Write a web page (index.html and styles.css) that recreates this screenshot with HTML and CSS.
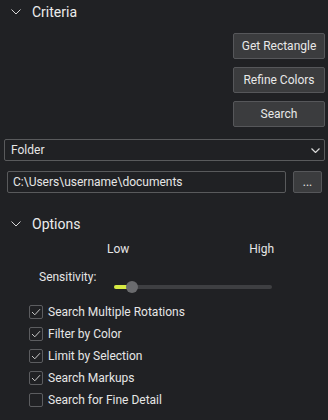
FILE: index.html
```html
<!DOCTYPE html>
<html>
<head>
<meta charset="utf-8">
<link rel="stylesheet" href="styles.css">
</head>
<body>
<div class="panel">
  <div class="section-head">
    <svg class="chev" width="10" height="6" viewBox="0 0 10 6"><polyline points="0.5,0.5 5,5 9.5,0.5" fill="none" stroke="#d8d8d8" stroke-width="1"/></svg>
    <span class="section-title">Criteria</span>
  </div>
  <div class="btn-col">
    <button class="btn">Get Rectangle</button>
    <button class="btn">Refine Colors</button>
    <button class="btn">Search</button>
  </div>
  <div class="select">
    <span>Folder</span>
    <svg width="9" height="5" viewBox="0 0 9 5"><polyline points="0.5,0.5 4.5,4.5 8.5,0.5" fill="none" stroke="#d8d8d8" stroke-width="1.2"/></svg>
  </div>
  <div class="path-row">
    <div class="input">C:\Users\username\documents</div>
    <button class="btn small">...</button>
  </div>
  <div class="section-head options">
    <svg class="chev" width="10" height="6" viewBox="0 0 10 6"><polyline points="0.5,0.5 5,5 9.5,0.5" fill="none" stroke="#d8d8d8" stroke-width="1"/></svg>
    <span class="section-title">Options</span>
  </div>
  <div class="scale-row">
    <span>Low</span>
    <span class="high">High</span>
  </div>
  <div class="sens-row">
    <span class="sens-label">Sensitivity:</span>
    <div class="slider">
      <div class="fill"></div>
      <div class="thumb"></div>
    </div>
  </div>
  <div class="checks">
    <div class="check"><span class="box on"><svg width="10" height="8" viewBox="0 0 10 8"><polyline points="1,4 3.8,6.8 9,1.2" fill="none" stroke="#c8c8c8" stroke-width="1"/></svg></span>Search Multiple Rotations</div>
    <div class="check"><span class="box on"><svg width="10" height="8" viewBox="0 0 10 8"><polyline points="1,4 3.8,6.8 9,1.2" fill="none" stroke="#c8c8c8" stroke-width="1"/></svg></span>Filter by Color</div>
    <div class="check"><span class="box on"><svg width="10" height="8" viewBox="0 0 10 8"><polyline points="1,4 3.8,6.8 9,1.2" fill="none" stroke="#c8c8c8" stroke-width="1"/></svg></span>Limit by Selection</div>
    <div class="check"><span class="box on"><svg width="10" height="8" viewBox="0 0 10 8"><polyline points="1,4 3.8,6.8 9,1.2" fill="none" stroke="#c8c8c8" stroke-width="1"/></svg></span>Search Markups</div>
    <div class="check"><span class="box"></span>Search for Fine Detail</div>
  </div>
</div>
</body>
</html>
```

FILE: styles.css
```css
html, body {
  margin: 0;
  padding: 0;
  background: #202124;
  width: 328px;
  height: 420px;
  overflow: hidden;
}
.panel {
  font-family: Roboto, "Liberation Sans", sans-serif;
  font-size: 12px;
  color: #e6e6e6;
  display: flex;
  flex-direction: column;
}
.section-head {
  display: flex;
  align-items: center;
  height: 24px;
  padding-left: 11px;
  gap: 11px;
}
.section-title {
  font-size: 14px;
  color: #ececec;
}
.options {
  margin-top: 19px;
}
.btn-col {
  display: flex;
  flex-direction: column;
  align-items: flex-end;
  gap: 8px;
  margin-top: 9px;
  padding-right: 3px;
}
.btn {
  font-family: Roboto, "Liberation Sans", sans-serif;
  font-size: 12px;
  color: #e8e8e8;
  background: #3b3c3e;
  border: 1px solid #56575a;
  border-radius: 2px;
  width: 92px;
  height: 26px;
  padding: 0;
}
.select {
  margin: 12px 3px 0 4px;
  height: 22px;
  box-sizing: border-box;
  border: 1px solid #595a5c;
  border-radius: 2px;
  display: flex;
  align-items: center;
  justify-content: space-between;
  padding: 0 4px 0 6px;
}
.path-row {
  display: flex;
  gap: 7px;
  margin: 10px 6px 0 7px;
  height: 22px;
}
.input {
  flex: 1;
  box-sizing: border-box;
  border: 1px solid #595a5c;
  border-radius: 2px;
  display: flex;
  align-items: center;
  padding-left: 5px;
}
.btn.small {
  width: 29px;
  height: 22px;
  line-height: 20px;
}
.scale-row {
  display: flex;
  margin-top: 5px;
  padding-left: 107px;
  padding-right: 54px;
  height: 16px;
  align-items: center;
}
.high {
  margin-left: auto;
}
.sens-row {
  display: flex;
  align-items: flex-start;
  margin-top: 12px;
  padding-left: 39px;
}
.sens-label {
  line-height: 16px;
  width: 75px;
}
.slider {
  margin-top: 16px;
  position: relative;
  width: 158px;
  height: 4px;
  border-radius: 2px;
  background: #3e3f42;
}
.fill {
  width: 14px;
  height: 4px;
  border-radius: 2px;
  background: #d6ea43;
}
.thumb {
  position: absolute;
  left: 12px;
  top: -4px;
  width: 12px;
  height: 12px;
  border-radius: 50%;
  background: #6a6b6e;
}
.checks {
  margin-top: 12px;
  padding-left: 29px;
  display: flex;
  flex-direction: column;
}
.check {
  display: flex;
  align-items: center;
  gap: 5px;
  height: 22px;
}
.box {
  width: 14px;
  height: 14px;
  box-sizing: border-box;
  border: 1px solid #5c5d60;
  border-radius: 2px;
  display: flex;
  align-items: center;
  justify-content: center;
}
```
